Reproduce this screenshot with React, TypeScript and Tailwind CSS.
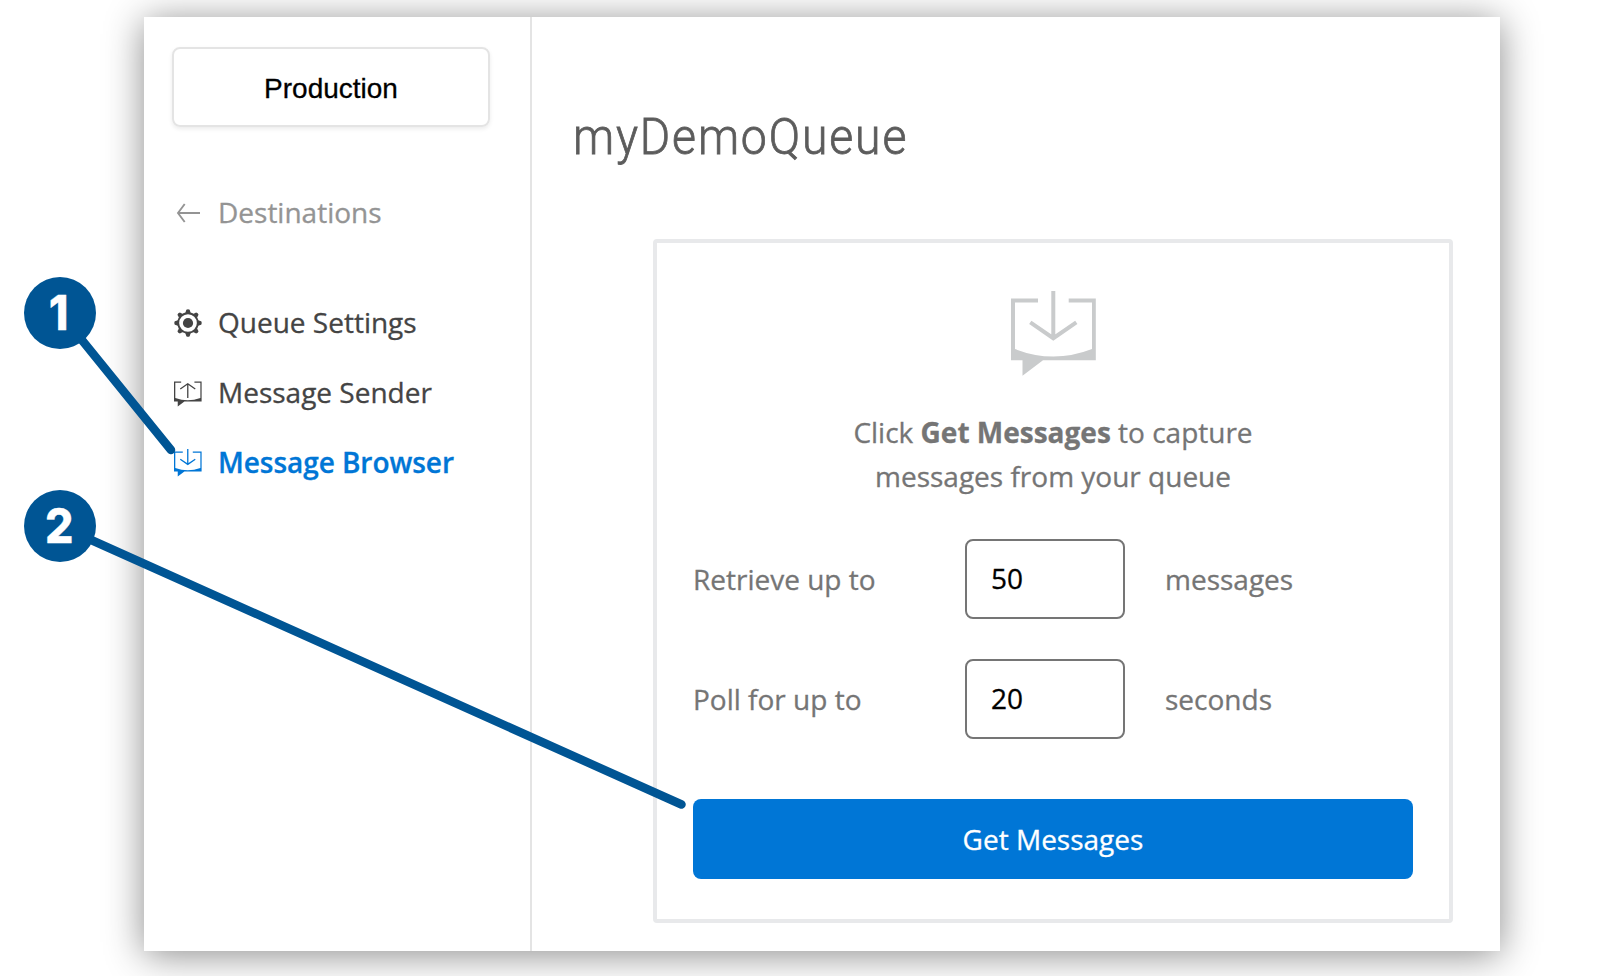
import React from "react";

function ArrowLeftIcon() {
  return (
    <svg viewBox="0 0 24 20" className="h-5 w-6" fill="none" stroke="currentColor" strokeWidth="1.9">
      <path d="M24 10H2M8.7 1L2 10L8.7 19" />
    </svg>
  );
}

function GearIcon() {
  const teeth = [0, 45, 90, 135, 180, 225, 270, 315];
  return (
    <svg viewBox="-14 -14 28 28" className="h-7 w-7" fill="currentColor">
      <circle r="9.8" fill="none" stroke="currentColor" strokeWidth="1.9" />
      <circle r="5.1" />
      {teeth.map((a) => (
        <path key={a} transform={`rotate(${a})`} d="M-2.7 -10L-1.7 -13.2Q0 -14.2 1.7 -13.2L2.7 -10Z" />
      ))}
    </svg>
  );
}

function MessageIcon({ direction, className }: { direction: "up" | "down"; className: string }) {
  return (
    <svg viewBox="0 0 86 86" className={className} fill="currentColor">
      <path d={direction === "down" ? "M0 7.6H27V11.6H4V58Q42.3 73 81 58V11.6H57.7V7.6H84.8V69.3H32L11.5 84.7V69.3H0Z" : "M0 7.6H22V11.6H4V58Q42.3 73 81 58V11.6H62.7V7.6H84.8V69.3H32L11.5 84.7V69.3H0Z"} />
      {direction === "down" ? (
        <path d="M42.3 0V46M19.3 31.3L42.3 47.2L65.3 31.3" fill="none" stroke="currentColor" strokeWidth="4" />
      ) : (
        <path d="M42.3 58V15M19.3 30.5L42.3 14.5L65.3 30.5" fill="none" stroke="currentColor" strokeWidth="4" />
      )}
    </svg>
  );
}

function NavItem({ icon, label, className }: { icon: React.ReactNode; label: string; className: string }) {
  return (
    <a className={`flex h-[70px] items-center gap-4 whitespace-nowrap ${className}`}>
      <span className="flex w-7 shrink-0 justify-center">{icon}</span>
      <span className="pb-0.5">{label}</span>
    </a>
  );
}

function Sidebar() {
  return (
    <aside className="flex w-[388px] shrink-0 flex-col border-r-2 border-[#e4e4e4] pt-[30px] pl-7 text-[28px] leading-[38px]">
      <button className="h-20 w-[318px] rounded-lg border-2 border-[#e4e4e4] pt-1 font-['Liberation_Sans',sans-serif] text-[28px] text-black shadow-[0_2px_4px_rgba(0,0,0,0.08)]">
        Production
      </button>
      <nav className="mt-[51px] flex flex-col pl-0.5">
        <NavItem icon={<ArrowLeftIcon />} label="Destinations" className="text-[#949494]" />
        <div className="mt-10">
          <NavItem icon={<GearIcon />} label="Queue Settings" className="text-[#444]" />
          <NavItem icon={<MessageIcon direction="up" className="h-7 w-7" />} label="Message Sender" className="text-[#444]" />
          <NavItem icon={<MessageIcon direction="down" className="h-7 w-7" />} label="Message Browser" className="font-semibold tracking-[-0.05px] text-[#0076d6]" />
        </div>
      </nav>
    </aside>
  );
}

function Field({ label, value, unit }: { label: string; value: string; unit: string }) {
  return (
    <label className="flex h-20 items-center">
      <span className="w-[272px]">{label}</span>
      <input readOnly value={value} className="h-20 w-40 rounded-lg border-2 border-[#757575] bg-white pb-0.5 pl-6 text-black outline-none" />
      <span className="ml-10">{unit}</span>
    </label>
  );
}

function Callout({ n, className }: { n: string; className: string }) {
  return (
    <div className={`absolute left-6 flex h-[72px] w-[72px] items-center justify-center rounded-full bg-[#005594] pr-0.5 font-[Inter,sans-serif] text-[48px] leading-none font-extrabold text-white ${className}`}>
      <span className="scale-x-[0.93]">{n}</span>
    </div>
  );
}

export default function App() {
  return (
    <div className="relative h-[976px] w-[1622px] overflow-hidden bg-white pt-[17px] pl-36 font-['Open_Sans',sans-serif] [-webkit-text-stroke:0.3px]">
      <main className="flex h-[934px] w-[1356px] bg-white shadow-[0_4px_36px_rgba(0,0,0,0.46)]">
        <Sidebar />
        <section className="flex flex-col pl-[41px]">
          <h1 className="mt-[90px] h-[60px] origin-left scale-x-[0.927] self-start font-[Roboto,sans-serif] text-[50px] leading-[60px] font-light tracking-[2px] text-[#5c5c5c] [-webkit-text-stroke:0.8px]">
            myDemoQueue
          </h1>
          <div className="mt-[72px] ml-20 flex h-[684px] w-[800px] flex-col rounded-[4px] border-4 border-[#e8e9eb] px-9 pt-12 text-[28px] leading-[44px] text-[#757575]">
            <MessageIcon direction="down" className="ml-[317.7px] h-[86px] w-[86px] shrink-0 text-[#c9cbcc]" />
            <p className="mt-[33px] text-center">
              Click <strong className="font-bold">Get Messages</strong> to capture
              <br />
              messages from your queue
            </p>
            <div className="mt-[41px] flex flex-col gap-10">
              <Field label="Retrieve up to" value="50" unit="messages" />
              <Field label="Poll for up to" value="20" unit="seconds" />
            </div>
            <button className="mt-[60px] h-20 shrink-0 rounded-lg bg-[#0076d6] text-white">Get Messages</button>
          </div>
        </section>
      </main>
      <svg className="pointer-events-none absolute inset-0 h-full w-full" viewBox="0 0 1622 976" fill="none" stroke="#005594" strokeWidth="8.5" strokeLinecap="round">
        <path d="M60 313L171 450M60 526L681.5 804.5" />
      </svg>
      <Callout n="1" className="top-[277px]" />
      <Callout n="2" className="top-[490px]" />
    </div>
  );
}
